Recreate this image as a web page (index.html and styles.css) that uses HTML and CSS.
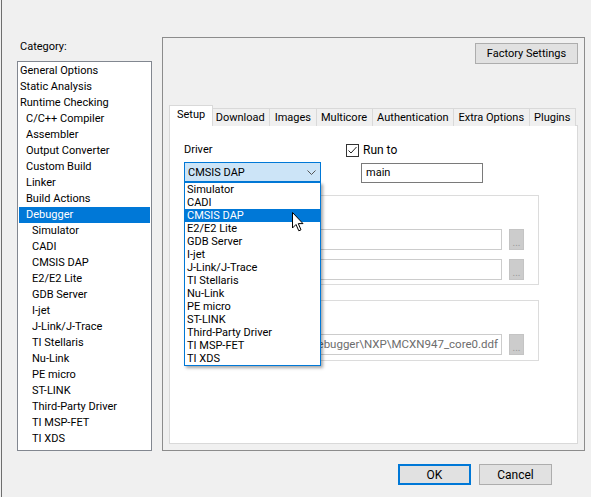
FILE: index.html
```html
<!DOCTYPE html>
<html lang="en">
<head>
    <meta charset="UTF-8">
    <meta name="viewport" content="width=device-width, initial-scale=1.0">
    <title>Options</title>
    <link rel="stylesheet" href="styles.css">
</head>
<body>
    <div class="frame">
        <div class="main">
            <div class="category">
                <div class="category-label">Category:</div>
                <ul class="tree">
                    <li>General Options</li>
                    <li>Static Analysis</li>
                    <li>Runtime Checking</li>
                    <li class="l1">C/C++ Compiler</li>
                    <li class="l1">Assembler</li>
                    <li class="l1">Output Converter</li>
                    <li class="l1">Custom Build</li>
                    <li class="l1">Linker</li>
                    <li class="l1">Build Actions</li>
                    <li class="l1 selected">Debugger</li>
                    <li class="l2">Simulator</li>
                    <li class="l2">CADI</li>
                    <li class="l2">CMSIS DAP</li>
                    <li class="l2">E2/E2 Lite</li>
                    <li class="l2">GDB Server</li>
                    <li class="l2">I-jet</li>
                    <li class="l2">J-Link/J-Trace</li>
                    <li class="l2">TI Stellaris</li>
                    <li class="l2">Nu-Link</li>
                    <li class="l2">PE micro</li>
                    <li class="l2">ST-LINK</li>
                    <li class="l2">Third-Party Driver</li>
                    <li class="l2">TI MSP-FET</li>
                    <li class="l2">TI XDS</li>
                </ul>
            </div>

            <div class="panel">
                <div class="panel-top">
                    <button class="btn factory">Factory Settings</button>
                </div>
                <div class="tabs">
                    <div class="tab active">Setup</div>
                    <div class="tab">Download</div>
                    <div class="tab">Images</div>
                    <div class="tab">Multicore</div>
                    <div class="tab">Authentication</div>
                    <div class="tab">Extra Options</div>
                    <div class="tab">Plugins</div>
                </div>
                <div class="tab-body">
                    <div class="driver-row">
                        <div class="driver">
                            <div class="field-label">Driver</div>
                            <div class="combo-wrap">
                                <div class="combo">
                                    <span>CMSIS DAP</span>
                                    <svg class="chevron" width="9" height="5" viewBox="0 0 9 5">
                                        <path d="M0.5 0.5 L4.5 4.5 L8.5 0.5" fill="none" stroke="#555" stroke-width="1"/>
                                    </svg>
                                </div>
                                <ul class="dropdown">
                                    <li>Simulator</li>
                                    <li>CADI</li>
                                    <li class="hot">CMSIS DAP</li>
                                    <li>E2/E2 Lite</li>
                                    <li>GDB Server</li>
                                    <li>I-jet</li>
                                    <li>J-Link/J-Trace</li>
                                    <li>TI Stellaris</li>
                                    <li>Nu-Link</li>
                                    <li>PE micro</li>
                                    <li>ST-LINK</li>
                                    <li>Third-Party Driver</li>
                                    <li>TI MSP-FET</li>
                                    <li>TI XDS</li>
                                </ul>
                                <!-- mouse pointer over the list -->
                                <svg class="cursor" width="13" height="20" viewBox="0 0 13 20">
                                    <path d="M0.5 0.5 L0.5 16 L4 12.5 L6.8 18.8 L9 17.8 L6.3 11.6 L11 11.6 Z" fill="#fff" stroke="#000" stroke-width="1" stroke-linejoin="round"/>
                                </svg>
                            </div>
                        </div>
                        <div class="run-to">
                            <label class="check-row">
                                <span class="checkbox">
                                    <svg width="11" height="11" viewBox="0 0 11 11">
                                        <path d="M1.5 5.5 L4 8 L9.5 2" fill="none" stroke="#222" stroke-width="1"/>
                                    </svg>
                                </span>
                                Run to
                            </label>
                            <div class="text-input">main</div>
                        </div>
                    </div>

                    <div class="group first">
                        <div class="file-row">
                            <div class="text-input disabled"></div>
                            <button class="dots">...</button>
                        </div>
                        <div class="file-row">
                            <div class="text-input disabled"></div>
                            <button class="dots">...</button>
                        </div>
                    </div>

                    <div class="group second">
                        <div class="file-row">
                            <div class="text-input disabled path"><span>\debugger\NXP\MCXN947_core0.ddf</span></div>
                            <button class="dots">...</button>
                        </div>
                    </div>
                </div>
            </div>
        </div>

        <div class="buttons">
            <button class="btn default">OK</button>
            <button class="btn">Cancel</button>
        </div>
    </div>
</body>
</html>
```

FILE: styles.css
```css
body {
    margin: 0;
    background-color: #f0f0f0;
    font-family: Roboto, "Liberation Sans", sans-serif;
    font-size: 11px;
    color: #000;
}
ul {
    list-style: none;
    margin: 0;
    padding: 0;
}
.frame {
    width: 589px;
    height: 497px;
    margin-left: 1px;
    border-left: 1px solid #6e6e6e;
    box-sizing: border-box;
}
.main {
    display: flex;
    gap: 10px;
    padding: 37px 0 0 15px;
}

/* left tree */
.category {
    width: 135px;
    padding-top: 3px;
}
.category-label {
    height: 14px;
    line-height: 14px;
    padding-left: 3px;
    margin-bottom: 7px;
}
.tree {
    height: 390px;
    box-sizing: border-box;
    border: 1px solid #828790;
    background-color: white;
    padding: 1px 1px 0 1px;
}
.tree li {
    height: 16px;
    line-height: 16px;
    padding-left: 1px;
    white-space: nowrap;
}
.tree .l1 {
    padding-left: 7px;
}
.tree .l2 {
    padding-left: 13px;
}
.tree .selected {
    background-color: #0078d7;
    color: white;
}

/* right panel */
.panel {
    width: 423px;
    height: 414px;
    box-sizing: border-box;
    border: 1px solid #8c8c8c;
    padding: 5px 6px 6px 6px;
    display: flex;
    flex-direction: column;
}
.panel-top {
    display: flex;
    justify-content: flex-end;
}
.btn {
    font-family: inherit;
    font-size: 11px;
    height: 21px;
    padding: 0;
    background-color: #e1e1e1;
    border: 1px solid #adadad;
    color: #000;
}
.factory {
    width: 103px;
}
.tabs {
    display: flex;
    align-items: flex-end;
    margin-top: 41px;
    margin-bottom: -1px;
    padding-left: 2px;
    position: relative;
    z-index: 1;
}
.tab {
    height: 18px;
    line-height: 18px;
    padding: 0 4.5px;
    box-sizing: border-box;
    border: 1px solid #d9d9d9;
    border-bottom: none;
    margin-left: -1px;
    background-color: #f0f0f0;
    white-space: nowrap;
}
.tab.active {
    height: 21px;
    line-height: 18px;
    margin-left: -2px;
    margin-right: -2px;
    padding: 0 7px;
    background-color: white;
    position: relative;
    z-index: 2;
}
.tab-body {
    flex: 1;
    background-color: white;
    border: 1px solid #d9d9d9;
    padding: 17px 0 0 14px;
}

.driver-row {
    display: flex;
    gap: 25px;
}
.driver {
    width: 137px;
}
.field-label {
    height: 14px;
    line-height: 14px;
    margin-bottom: 5px;
}
.combo-wrap {
    position: relative;
}
.combo {
    height: 20px;
    box-sizing: border-box;
    border: 1px solid #0078d7;
    background-color: #cce4f7;
    display: flex;
    align-items: center;
    justify-content: space-between;
    padding: 0 3px 0 3px;
}
.chevron {
    margin-right: 1px;
}
.dropdown {
    position: absolute;
    top: 20px;
    left: 0;
    width: 137px;
    box-sizing: border-box;
    border: 1px solid #0078d7;
    background-color: white;
    box-shadow: 2px 2px 3px rgba(0, 0, 0, 0.35);
    z-index: 5;
}
.dropdown li {
    height: 13px;
    line-height: 13px;
    padding-left: 2px;
    white-space: nowrap;
}
.dropdown .hot {
    background-color: #0078d7;
    color: white;
}
.cursor {
    position: absolute;
    top: 50px;
    left: 108px;
    z-index: 6;
}

.run-to {
    display: flex;
    flex-direction: column;
}
.check-row {
    height: 14px;
    display: flex;
    align-items: center;
    gap: 4px;
    font-size: 12px;
}
.checkbox {
    width: 13px;
    height: 13px;
    box-sizing: border-box;
    border: 1px solid #333;
    background-color: white;
    display: flex;
    align-items: center;
    justify-content: center;
}
.text-input {
    height: 20px;
    line-height: 18px;
    box-sizing: border-box;
    border: 1px solid #7a7a7a;
    background-color: white;
    padding: 0 4px;
}
.run-to .text-input {
    width: 122px;
    margin: 6px 0 0 15px;
}

.group {
    width: 355px;
    box-sizing: border-box;
    border: 1px solid #dcdcdc;
    padding: 33px 14px 4px 8px;
}
.group.first {
    margin-top: 12px;
    height: 90px;
}
.group.second {
    margin-top: 15px;
    height: 61px;
}
.file-row {
    display: flex;
    gap: 7px;
    margin-bottom: 9px;
}
.file-row .text-input {
    flex: 1;
    height: 21px;
}
.text-input.disabled {
    border-color: #cccccc;
    color: #6d6d6d;
}
.path {
    display: flex;
    justify-content: flex-end;
    overflow: hidden;
    white-space: nowrap;
    padding-right: 3px;
    font-size: 11.5px;
}
.dots {
    width: 15px;
    height: 21px;
    padding: 0;
    border: 1px solid #c4c4c4;
    background-color: #cccccc;
    color: #9a9a9a;
    font-family: inherit;
    font-size: 10px;
    line-height: 26px;
}

.buttons {
    display: flex;
    justify-content: flex-end;
    gap: 8px;
    margin-top: 13px;
    padding-right: 38px;
}
.buttons .btn {
    width: 73px;
    font-size: 12px;
}
.btn.default {
    border: 2px solid #0078d7;
}
```
